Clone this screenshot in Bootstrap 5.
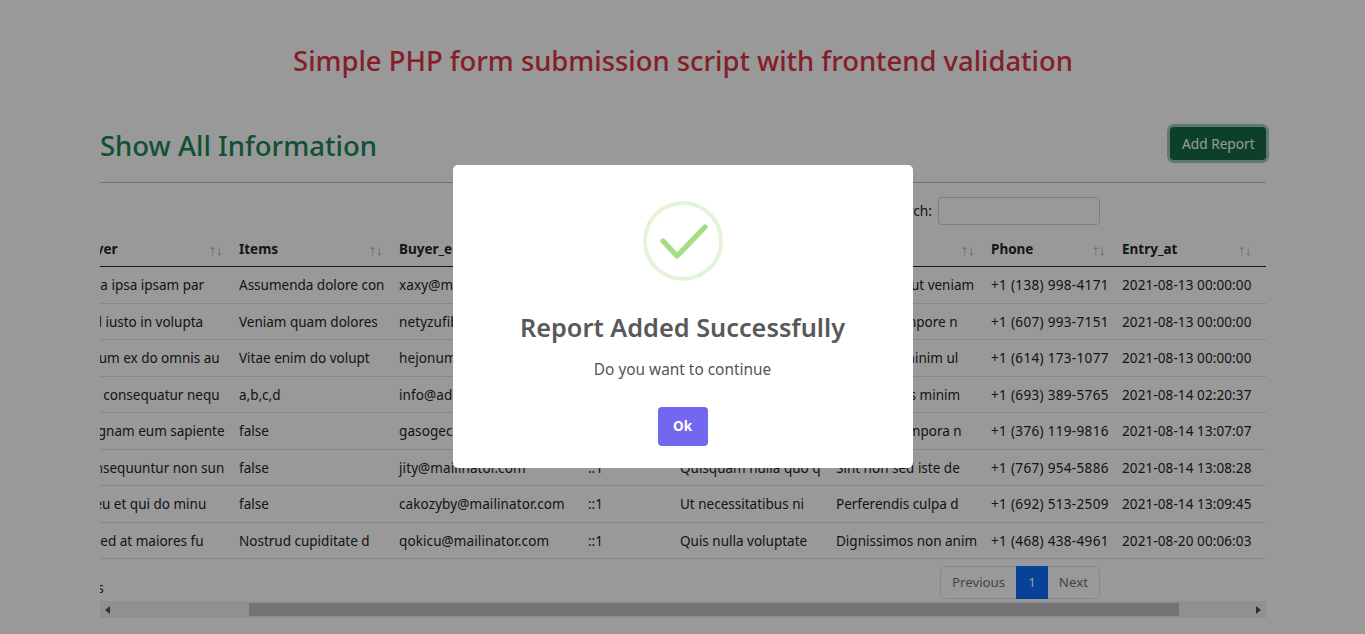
<!DOCTYPE html>
<html lang="en">
<head>
<meta charset="utf-8">
<title>Show All Information</title>
<link rel="stylesheet" href="https://cdn.jsdelivr.net/npm/bootstrap@5.3.0/dist/css/bootstrap.min.css">
<style>
html,body{height:100%;overflow:hidden}
body{font-family:"Noto Sans","Open Sans",sans-serif;color:#212529}
.page-wrap{width:1166px;margin-left:100px}
.page-title{font-size:27.4px;font-weight:500;line-height:40px;padding-top:41px;margin:0 0 45px;text-align:center}
.head-row{height:40px}
.sec-title{font-size:27.5px;font-weight:500;margin:0;line-height:40px}
.add-btn{font-size:13.7px;padding:0 12px;height:33px;line-height:33px;width:96px;margin-top:1px;white-space:nowrap;background:#146c43;color:#fff;border:0;box-shadow:0 0 0 3px rgba(60,153,110,.5);border-radius:4px}
.sep{margin:16px 0 14px;border-color:#000;opacity:.25}
.scroll-x{overflow:hidden;height:404px}
.fake-bar{height:17px;background:#f1f1f1}
.bar-btn{width:16px}
.bar-track{flex:1 1 auto;padding:2px 0}
.bar-thumb{height:13px;width:930px;background:#c1c1c1}
.dt-wrap{width:1167px;font-size:13.7px}
.search-row{height:28px;margin-bottom:5px}
.search-box{width:162px;height:28px;border:1px solid #ced4da;border-radius:4px;margin-left:6px;background:#fff}
.dt-table{width:1422px;table-layout:fixed;font-size:13.5px;margin:0 0 7px}
.dt-table th,.dt-table td{padding:9px 8px 7px;line-height:19.5px;white-space:nowrap;overflow:hidden;height:36.5px}
.dt-table th{font-weight:700;padding-top:7.5px;padding-bottom:6.5px}
.dt-table>thead>tr>th{border-bottom:1.5px solid #212529}
.dt-table td.cell-mail{letter-spacing:.1px}
.dt-table td.cell-phone{letter-spacing:.33px}
.dt-table td.cell-date{letter-spacing:.1px}
.sort-mark{color:#212529;opacity:.35;font-weight:400;font-size:15px;letter-spacing:-1px;padding-right:1px}
.pager .page-link{font-size:13.3px;height:33px;line-height:31px;padding:0 11px;color:#6c757d;background:#fff;border-color:#dee2e6}
.pager .page-item.active .page-link{background:#0d6efd;border-color:#0d6efd;color:#fff}
.pager{margin:0}
.info-text{line-height:33px;padding-top:5px}
.overlay{background:rgba(0,0,0,.4);z-index:1060}
.dlg{width:460px;height:303px;margin-bottom:1px;padding-top:36px;color:#545454;border-radius:5px}
.dlg-title{font-size:25.3px;font-weight:600;color:#595959;line-height:36px;margin:28px 0 0}
.dlg-text{font-size:15.4px;line-height:22px;margin:14px 0 0}
.dlg-ok{width:50px;height:39px;padding:0;margin-top:26px;background:#7367f0;color:#fff;border:0;font-size:13.5px;font-weight:700;border-radius:4px}
.dlg-ok:hover{background:#7367f0;color:#fff}
</style>
</head>
<body>
<div class="page-wrap">
  <h1 class="page-title text-danger">Simple PHP form submission script with frontend validation</h1>
  <div class="head-row d-flex justify-content-between align-items-start">
    <h2 class="sec-title text-success">Show All Information</h2>
    <button class="btn add-btn" type="button">Add Report</button>
  </div>
  <hr class="sep">
  <div class="scroll-x" id="scroller">
    <div class="dt-wrap">
      <div class="search-row d-flex justify-content-end align-items-center">
        <label class="d-flex align-items-center">Search:<input class="search-box" type="search"></label>
      </div>
      <table class="table dt-table">
        <colgroup>
          <col style="width:50px"><col style="width:87px"><col style="width:161px"><col style="width:160px"><col style="width:189px"><col style="width:92px"><col style="width:156px"><col style="width:155px"><col style="width:131px"><col style="width:146px"><col>
        </colgroup>
        <thead>
          <tr>
            <th><div class="d-flex justify-content-between"><span>Id</span><span class="sort-mark">↑↓</span></div></th>
            <th><div class="d-flex justify-content-between"><span>Amount</span><span class="sort-mark">↑↓</span></div></th>
            <th><div class="d-flex justify-content-between"><span>Buyer</span><span class="sort-mark">↑↓</span></div></th>
            <th><div class="d-flex justify-content-between"><span>Items</span><span class="sort-mark">↑↓</span></div></th>
            <th><div class="d-flex justify-content-between"><span>Buyer_email</span><span class="sort-mark">↑↓</span></div></th>
            <th><div class="d-flex justify-content-between"><span>Buyer_ip</span><span class="sort-mark">↑↓</span></div></th>
            <th><div class="d-flex justify-content-between"><span>Note</span><span class="sort-mark">↑↓</span></div></th>
            <th><div class="d-flex justify-content-between"><span>City</span><span class="sort-mark">↑↓</span></div></th>
            <th><div class="d-flex justify-content-between"><span>Phone</span><span class="sort-mark">↑↓</span></div></th>
            <th><div class="d-flex justify-content-between"><span>Entry_at</span><span class="sort-mark">↑↓</span></div></th>
            <th></th>
          </tr>
        </thead>
        <tbody>
          <tr><td>1</td><td>6500</td><td>Est a ipsa ipsam par</td><td>Assumenda dolore con</td><td class="cell-mail">xaxy@mailinator.com</td><td>::1</td><td>Labore quia dolor</td><td>Accusamus ut veniam</td><td class="cell-phone">+1 (138) 998-4171</td><td class="cell-date">2021-08-13 00:00:00</td><td></td></tr>
          <tr><td>2</td><td>7400</td><td>Mol iusto in volupta</td><td>Veniam quam dolores</td><td class="cell-mail">netyzufib@mailinator.com</td><td>::1</td><td>Aut quia ipsum</td><td>Sed quo tempore n</td><td class="cell-phone">+1 (607) 993-7151</td><td class="cell-date">2021-08-13 00:00:00</td><td></td></tr>
          <tr><td>3</td><td>3100</td><td>Earum ex do omnis au</td><td>Vitae enim do volupt</td><td class="cell-mail">hejonum@mailinator.com</td><td>::1</td><td>Nisi sunt quo</td><td>Veritatis a minim ul</td><td class="cell-phone">+1 (614) 173-1077</td><td class="cell-date">2021-08-13 00:00:00</td><td></td></tr>
          <tr><td>4</td><td>5000</td><td>Aut consequatur nequ</td><td>a,b,c,d</td><td class="cell-mail">info@admin.com</td><td>::1</td><td>Dicta sit quo</td><td>Voluptatibus minim</td><td class="cell-phone">+1 (693) 389-5765</td><td class="cell-date">2021-08-14 02:20:37</td><td></td></tr>
          <tr><td>5</td><td>8800</td><td>Magnam eum sapiente</td><td>false</td><td class="cell-mail">gasogec@mailinator.com</td><td>::1</td><td>Omnis est quasi</td><td>Quia sed tempora n</td><td class="cell-phone">+1 (376) 119-9816</td><td class="cell-date">2021-08-14 13:07:07</td><td></td></tr>
          <tr><td>6</td><td>2900</td><td>Consequuntur non sun</td><td>false</td><td class="cell-mail">jity@mailinator.com</td><td>::1</td><td>Quisquam nulla quo q</td><td>Sint non sed iste de</td><td class="cell-phone">+1 (767) 954-5886</td><td class="cell-date">2021-08-14 13:08:28</td><td></td></tr>
          <tr><td>7</td><td>4300</td><td>Id eu et qui do minu</td><td>false</td><td class="cell-mail">cakozyby@mailinator.com</td><td>::1</td><td>Ut necessitatibus ni</td><td>Perferendis culpa d</td><td class="cell-phone">+1 (692) 513-2509</td><td class="cell-date">2021-08-14 13:09:45</td><td></td></tr>
          <tr><td>8</td><td>1200</td><td>Et sed at maiores fu</td><td>Nostrud cupiditate d</td><td class="cell-mail">qokicu@mailinator.com</td><td>::1</td><td>Quis nulla voluptate</td><td>Dignissimos non anim</td><td class="cell-phone">+1 (468) 438-4961</td><td class="cell-date">2021-08-20 00:06:03</td><td></td></tr>
        </tbody>
      </table>
      <div class="d-flex justify-content-between">
        <div class="info-text">Showing 1 to 8 of 8 entries</div>
        <ul class="pagination pager">
          <li class="page-item disabled"><a class="page-link" href="#">Previous</a></li>
          <li class="page-item active"><a class="page-link" href="#">1</a></li>
          <li class="page-item disabled"><a class="page-link" href="#">Next</a></li>
        </ul>
      </div>
    </div>
  </div>
  <div class="fake-bar d-flex align-items-stretch">
    <div class="bar-btn d-flex align-items-center justify-content-center"><svg width="6" height="8" viewBox="0 0 6 8"><path d="M5 0v8L0 4z" fill="#505050"/></svg></div>
    <div class="bar-track"><div class="bar-thumb" style="margin-left:133px"></div></div>
    <div class="bar-btn d-flex align-items-center justify-content-center"><svg width="6" height="8" viewBox="0 0 6 8"><path d="M1 0v8L6 4z" fill="#505050"/></svg></div>
  </div>
</div>
<div class="overlay position-fixed top-0 start-0 w-100 h-100 d-flex align-items-center justify-content-center">
  <div class="dlg bg-white text-center">
    <svg width="80" height="80" viewBox="0 0 80 80" class="d-block mx-auto">
      <circle cx="40" cy="40" r="38" fill="none" stroke="#a5dc86" stroke-opacity=".3" stroke-width="4"/>
      <path d="M20 40 L34 55 L62 26" fill="none" stroke="#a5dc86" stroke-width="5.3" stroke-linecap="round" stroke-linejoin="round"/>
      <path d="M5 21l1 1.5M56.5 74l1 1" stroke="#a5dc86" stroke-width="1"/>
    </svg>
    <h2 class="dlg-title">Report Added Successfully</h2>
    <p class="dlg-text">Do you want to continue</p>
    <button class="btn dlg-ok" type="button">Ok</button>
  </div>
</div>
<script src="https://cdn.jsdelivr.net/npm/bootstrap@5.3.0/dist/js/bootstrap.bundle.min.js"></script>
<script>document.getElementById('scroller').scrollLeft=167;</script>
</body>
</html>
